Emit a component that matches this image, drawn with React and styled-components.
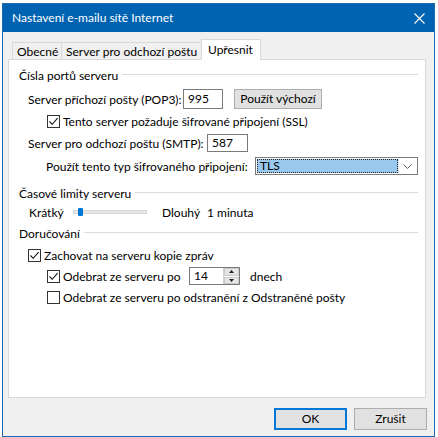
import React from "react";
import styled, { createGlobalStyle } from "styled-components";

const GlobalStyle = createGlobalStyle`
  html, body {
    margin: 0;
    background: #fff;
  }
  body {
    font-family: "Segoe UI", Lato, "Noto Sans", sans-serif;
    font-size: 12px;
    color: #000;
  }
`;

const Page = styled.div`
  width: 438px;
  height: 437px;
  box-sizing: border-box;
  padding: 3px 0 0 2px;
  overflow: hidden;
`;

const Window = styled.div`
  width: 433px;
  height: 434px;
  box-sizing: border-box;
  border: 1px solid #1a6ab3;
  background: #f0f0f0;
  display: flex;
  flex-direction: column;
`;

const TitleBar = styled.div`
  height: 28px;
  flex-shrink: 0;
  background: #0063b1;
  color: #fff;
  display: flex;
  align-items: center;
  justify-content: space-between;
  padding-left: 9px;
`;

const Title = styled.span`
  font-size: 12px;
  padding-bottom: 1px;
`;

const CloseBox = styled.div`
  width: 30px;
  height: 100%;
  display: flex;
  align-items: center;
  justify-content: center;
`;

const TabStrip = styled.div`
  margin-top: 7px;
  height: 20px;
  display: flex;
  align-items: flex-end;
  padding-left: 10px;
`;

const Tab = styled.div`
  box-sizing: border-box;
  height: ${(p) => (p.$active ? "21px" : "17px")};
  width: ${(p) => p.$w}px;
  margin-bottom: ${(p) => (p.$active ? "-1px" : "0")};
  margin-left: -1px;
  position: relative;
  z-index: ${(p) => (p.$active ? 2 : 1)};
  border: 1px solid #d9d9d9;
  border-bottom: none;
  background: ${(p) => (p.$active ? "#fff" : "#f0f0f0")};
  display: flex;
  align-items: center;
  padding-left: ${(p) => (p.$active ? "6px" : "4px")};
  padding-bottom: ${(p) => (p.$active ? "1px" : "0")};
  white-space: nowrap;
`;

const Panel = styled.div`
  box-sizing: border-box;
  height: 339px;
  margin: 0 8px 0 5px;
  border: 1px solid #d9d9d9;
  background: #fff;
  display: flex;
  flex-direction: column;
  padding-right: 7px;
`;

const Row = styled.div`
  display: flex;
  align-items: center;
  height: ${(p) => p.$h || 14}px;
  margin-top: ${(p) => p.$top}px;
  padding-left: ${(p) => p.$indent}px;
  white-space: nowrap;
`;

const GroupLine = styled.div`
  flex: 1;
  height: 1px;
  background: #dcdcdc;
  margin-left: 4px;
  margin-top: -1px;
`;

const Label = styled.span`
  display: inline-block;
  width: ${(p) => (p.$w ? `${p.$w}px` : "auto")};
  margin-left: ${(p) => p.$ml || 0}px;
  flex-shrink: 0;
`;

const TextBox = styled.div`
  box-sizing: border-box;
  width: ${(p) => p.$w}px;
  height: ${(p) => p.$h}px;
  border: 1px solid #7a7a7a;
  background: #fff;
  display: flex;
  align-items: center;
  padding-left: 4px;
  padding-bottom: 1px;
`;

const Button = styled.div`
  box-sizing: border-box;
  width: ${(p) => p.$w}px;
  height: ${(p) => p.$h}px;
  background: #e1e1e1;
  border: ${(p) => (p.$default ? "2px solid #0078d7" : "1px solid #adadad")};
  display: flex;
  align-items: center;
  justify-content: center;
  padding-bottom: 1px;
  margin-left: ${(p) => p.$ml || 0}px;
`;

const Box = styled.span`
  box-sizing: border-box;
  width: 13px;
  height: 13px;
  border: 1px solid #333;
  background: #fff;
  display: inline-flex;
  align-items: center;
  justify-content: center;
  flex-shrink: 0;
  margin-right: 3px;
`;

const Combo = styled.div`
  box-sizing: border-box;
  width: ${(p) => p.$w}px;
  height: 18px;
  border: 1px solid #7a7a7a;
  background: #fff;
  display: flex;
  padding: 1px;
`;

const ComboValue = styled.div`
  flex: 1;
  box-sizing: border-box;
  background: #99c9ef;
  border: 1px dotted #222;
  display: flex;
  align-items: center;
  padding-left: 2px;
  padding-bottom: 1px;
`;

const ComboArrow = styled.div`
  width: 17px;
  display: flex;
  align-items: center;
  justify-content: center;
  border-left: 1px solid #e0e0e0;
`;

const Track = styled.div`
  box-sizing: border-box;
  width: 74px;
  height: 4px;
  background: #e7e7e7;
  border: 1px solid #d6d6d6;
  margin-right: 15px;
  display: flex;
  align-items: center;
  padding-left: 4px;
`;

const Thumb = styled.div`
  width: 5px;
  height: 8px;
  border-radius: 1px;
  background: #0078d7;
  flex-shrink: 0;
`;

const Spin = styled.div`
  box-sizing: border-box;
  width: ${(p) => p.$w}px;
  height: 18px;
  border: 1px solid #7a7a7a;
  background: #fff;
  display: flex;
`;

const SpinText = styled.div`
  flex: 1;
  display: flex;
  align-items: center;
  padding-left: 4px;
  padding-bottom: 1px;
`;

const SpinButtons = styled.div`
  width: 15px;
  display: flex;
  flex-direction: column;
  gap: 1px;
  border-left: 1px solid #d0d0d0;
`;

const SpinButton = styled.div`
  flex: 1;
  background: #e5e5e5;
  border: 1px solid #c9c9c9;
  display: flex;
  align-items: center;
  justify-content: center;
`;

const Footer = styled.div`
  display: flex;
  justify-content: flex-end;
  gap: 7px;
  padding: 10px 7px 0 0;
`;

function Check({ on }) {
  return (
    <Box>
      {on && (
        <svg width="11" height="11" viewBox="0 0 11 11">
          <path d="M1.5 5.5 L4.2 8.3 L9.6 2.2" fill="none" stroke="#111" strokeWidth="1.1" />
        </svg>
      )}
    </Box>
  );
}

function Group({ top, children }) {
  return (
    <Row $top={top} $indent={10}>
      <span>{children}</span>
      <GroupLine />
    </Row>
  );
}

export default function App() {
  return (
    <Page>
      <GlobalStyle />
      <Window>
        <TitleBar>
          <Title>Nastavení e-mailu sítě Internet</Title>
          <CloseBox>
            <svg width="11" height="11" viewBox="0 0 11 11">
              <path d="M0.5 0.5 L10.5 10.5 M10.5 0.5 L0.5 10.5" stroke="#fff" strokeWidth="1.1" />
            </svg>
          </CloseBox>
        </TitleBar>

        <TabStrip>
          <Tab $w={50}>Obecné</Tab>
          <Tab $w={141}>Server pro odchozí poštu</Tab>
          <Tab $w={60} $active>
            Upřesnit
          </Tab>
        </TabStrip>

        <Panel>
          <Group top={8}>Čísla portů serveru</Group>
          <Row $top={7} $indent={19} $h={20}>
            <Label $w={155}>Server příchozí pošty (POP3):</Label>
            <TextBox $w={40} $h={20}>995</TextBox>
            <Button $w={88} $h={20} $ml={11}>
              Použít výchozí
            </Button>
          </Row>
          <Row $top={5} $indent={38}>
            <Check on />
            <span>Tento server požaduje šifrované připojení (SSL)</span>
          </Row>
          <Row $top={6} $indent={19} $h={18}>
            <Label $w={179}>Server pro odchozí poštu (SMTP):</Label>
            <TextBox $w={41} $h={18}>587</TextBox>
          </Row>
          <Row $top={5} $indent={37} $h={18}>
            <Label $w={209}>Použít tento typ šifrovaného připojení:</Label>
            <Combo $w={163}>
              <ComboValue>TLS</ComboValue>
              <ComboArrow>
                <svg width="9" height="5" viewBox="0 0 9 5">
                  <path d="M0.5 0.5 L4.5 4.5 L8.5 0.5" fill="none" stroke="#606060" strokeWidth="1" />
                </svg>
              </ComboArrow>
            </Combo>
          </Row>

          <Group top={11}>Časové limity serveru</Group>
          <Row $top={5} $indent={20}>
            <Label $w={44}>Krátký</Label>
            <Track>
              <Thumb />
            </Track>
            <Label $w={45}>Dlouhý</Label>
            <span>1 minuta</span>
          </Row>

          <Group top={7}>Doručování</Group>
          <Row $top={8} $indent={19}>
            <Check on />
            <span>Zachovat na serveru kopie zpráv</span>
          </Row>
          <Row $top={5} $indent={38} $h={18}>
            <Check on />
            <Label $w={126}>Odebrat ze serveru po</Label>
            <Spin $w={51}>
              <SpinText>14</SpinText>
              <SpinButtons>
                <SpinButton>
                  <svg width="5" height="3" viewBox="0 0 5 3">
                    <path d="M0 3 L2.5 0 L5 3 Z" fill="#222" />
                  </svg>
                </SpinButton>
                <SpinButton>
                  <svg width="5" height="3" viewBox="0 0 5 3">
                    <path d="M0 0 L2.5 3 L5 0 Z" fill="#222" />
                  </svg>
                </SpinButton>
              </SpinButtons>
            </Spin>
            <Label $ml={10}>dnech</Label>
          </Row>
          <Row $top={5} $indent={38}>
            <Check />
            <span>Odebrat ze serveru po odstranění z Odstraněné pošty</span>
          </Row>
        </Panel>

        <Footer>
          <Button $w={73} $h={22} $default>
            OK
          </Button>
          <Button $w={73} $h={22}>
            Zrušit
          </Button>
        </Footer>
      </Window>
    </Page>
  );
}
